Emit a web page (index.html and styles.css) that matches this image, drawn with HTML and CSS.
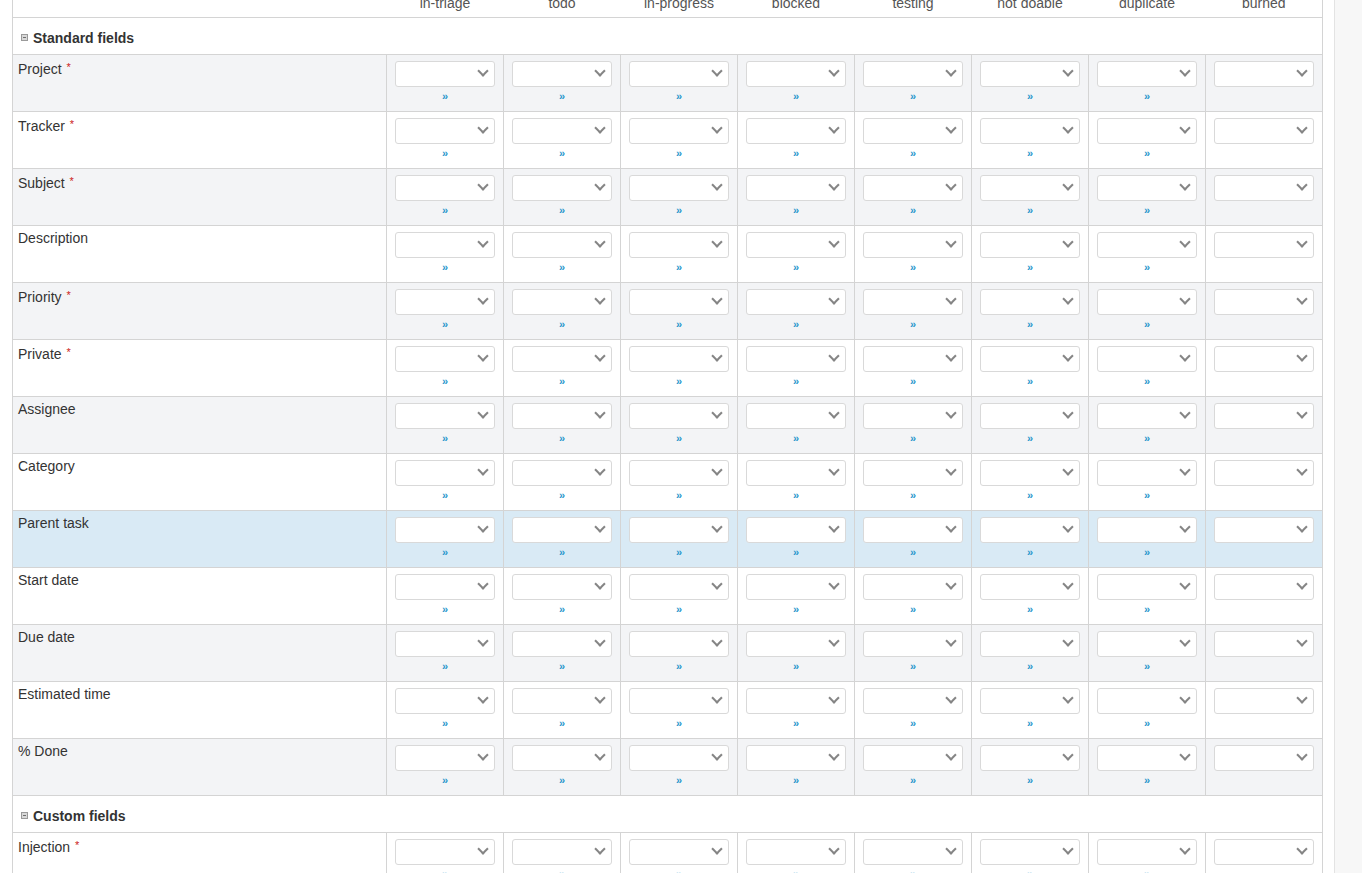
FILE: index.html
```html
<!DOCTYPE html>
<html>
<head>
<meta charset="utf-8">
<title>Workflow fields</title>
<link rel="stylesheet" href="styles.css">
</head>
<body>
<div class="page">
<div class="main">
<table class="wf">
<colgroup><col class="c-name"><col class="c-st"><col class="c-st"><col class="c-st"><col class="c-st"><col class="c-st"><col class="c-st"><col class="c-st"><col class="c-st"></colgroup>
<thead>
<tr><th class="first"></th><th>in-triage</th><th>todo</th><th>in-progress</th><th>blocked</th><th>testing</th><th>not doable</th><th>duplicate</th><th class="last">burned</th></tr>
</thead>
<tbody>
<tr class="group"><td colspan="9"><span class="toggle"></span>Standard fields</td></tr>
<tr class="odd"><td class="name">Project <span class="req">*</span></td><td><span class="sel"></span><a class="more" href="#">»</a></td><td><span class="sel"></span><a class="more" href="#">»</a></td><td><span class="sel"></span><a class="more" href="#">»</a></td><td><span class="sel"></span><a class="more" href="#">»</a></td><td><span class="sel"></span><a class="more" href="#">»</a></td><td><span class="sel"></span><a class="more" href="#">»</a></td><td><span class="sel"></span><a class="more" href="#">»</a></td><td><span class="sel"></span></td></tr>
<tr><td class="name">Tracker <span class="req">*</span></td><td><span class="sel"></span><a class="more" href="#">»</a></td><td><span class="sel"></span><a class="more" href="#">»</a></td><td><span class="sel"></span><a class="more" href="#">»</a></td><td><span class="sel"></span><a class="more" href="#">»</a></td><td><span class="sel"></span><a class="more" href="#">»</a></td><td><span class="sel"></span><a class="more" href="#">»</a></td><td><span class="sel"></span><a class="more" href="#">»</a></td><td><span class="sel"></span></td></tr>
<tr class="odd"><td class="name">Subject <span class="req">*</span></td><td><span class="sel"></span><a class="more" href="#">»</a></td><td><span class="sel"></span><a class="more" href="#">»</a></td><td><span class="sel"></span><a class="more" href="#">»</a></td><td><span class="sel"></span><a class="more" href="#">»</a></td><td><span class="sel"></span><a class="more" href="#">»</a></td><td><span class="sel"></span><a class="more" href="#">»</a></td><td><span class="sel"></span><a class="more" href="#">»</a></td><td><span class="sel"></span></td></tr>
<tr><td class="name">Description</td><td><span class="sel"></span><a class="more" href="#">»</a></td><td><span class="sel"></span><a class="more" href="#">»</a></td><td><span class="sel"></span><a class="more" href="#">»</a></td><td><span class="sel"></span><a class="more" href="#">»</a></td><td><span class="sel"></span><a class="more" href="#">»</a></td><td><span class="sel"></span><a class="more" href="#">»</a></td><td><span class="sel"></span><a class="more" href="#">»</a></td><td><span class="sel"></span></td></tr>
<tr class="odd"><td class="name">Priority <span class="req">*</span></td><td><span class="sel"></span><a class="more" href="#">»</a></td><td><span class="sel"></span><a class="more" href="#">»</a></td><td><span class="sel"></span><a class="more" href="#">»</a></td><td><span class="sel"></span><a class="more" href="#">»</a></td><td><span class="sel"></span><a class="more" href="#">»</a></td><td><span class="sel"></span><a class="more" href="#">»</a></td><td><span class="sel"></span><a class="more" href="#">»</a></td><td><span class="sel"></span></td></tr>
<tr><td class="name">Private <span class="req">*</span></td><td><span class="sel"></span><a class="more" href="#">»</a></td><td><span class="sel"></span><a class="more" href="#">»</a></td><td><span class="sel"></span><a class="more" href="#">»</a></td><td><span class="sel"></span><a class="more" href="#">»</a></td><td><span class="sel"></span><a class="more" href="#">»</a></td><td><span class="sel"></span><a class="more" href="#">»</a></td><td><span class="sel"></span><a class="more" href="#">»</a></td><td><span class="sel"></span></td></tr>
<tr class="odd"><td class="name">Assignee</td><td><span class="sel"></span><a class="more" href="#">»</a></td><td><span class="sel"></span><a class="more" href="#">»</a></td><td><span class="sel"></span><a class="more" href="#">»</a></td><td><span class="sel"></span><a class="more" href="#">»</a></td><td><span class="sel"></span><a class="more" href="#">»</a></td><td><span class="sel"></span><a class="more" href="#">»</a></td><td><span class="sel"></span><a class="more" href="#">»</a></td><td><span class="sel"></span></td></tr>
<tr><td class="name">Category</td><td><span class="sel"></span><a class="more" href="#">»</a></td><td><span class="sel"></span><a class="more" href="#">»</a></td><td><span class="sel"></span><a class="more" href="#">»</a></td><td><span class="sel"></span><a class="more" href="#">»</a></td><td><span class="sel"></span><a class="more" href="#">»</a></td><td><span class="sel"></span><a class="more" href="#">»</a></td><td><span class="sel"></span><a class="more" href="#">»</a></td><td><span class="sel"></span></td></tr>
<tr class="hl"><td class="name">Parent task</td><td><span class="sel"></span><a class="more" href="#">»</a></td><td><span class="sel"></span><a class="more" href="#">»</a></td><td><span class="sel"></span><a class="more" href="#">»</a></td><td><span class="sel"></span><a class="more" href="#">»</a></td><td><span class="sel"></span><a class="more" href="#">»</a></td><td><span class="sel"></span><a class="more" href="#">»</a></td><td><span class="sel"></span><a class="more" href="#">»</a></td><td><span class="sel"></span></td></tr>
<tr><td class="name">Start date</td><td><span class="sel"></span><a class="more" href="#">»</a></td><td><span class="sel"></span><a class="more" href="#">»</a></td><td><span class="sel"></span><a class="more" href="#">»</a></td><td><span class="sel"></span><a class="more" href="#">»</a></td><td><span class="sel"></span><a class="more" href="#">»</a></td><td><span class="sel"></span><a class="more" href="#">»</a></td><td><span class="sel"></span><a class="more" href="#">»</a></td><td><span class="sel"></span></td></tr>
<tr class="odd"><td class="name">Due date</td><td><span class="sel"></span><a class="more" href="#">»</a></td><td><span class="sel"></span><a class="more" href="#">»</a></td><td><span class="sel"></span><a class="more" href="#">»</a></td><td><span class="sel"></span><a class="more" href="#">»</a></td><td><span class="sel"></span><a class="more" href="#">»</a></td><td><span class="sel"></span><a class="more" href="#">»</a></td><td><span class="sel"></span><a class="more" href="#">»</a></td><td><span class="sel"></span></td></tr>
<tr><td class="name">Estimated time</td><td><span class="sel"></span><a class="more" href="#">»</a></td><td><span class="sel"></span><a class="more" href="#">»</a></td><td><span class="sel"></span><a class="more" href="#">»</a></td><td><span class="sel"></span><a class="more" href="#">»</a></td><td><span class="sel"></span><a class="more" href="#">»</a></td><td><span class="sel"></span><a class="more" href="#">»</a></td><td><span class="sel"></span><a class="more" href="#">»</a></td><td><span class="sel"></span></td></tr>
<tr class="odd"><td class="name">% Done</td><td><span class="sel"></span><a class="more" href="#">»</a></td><td><span class="sel"></span><a class="more" href="#">»</a></td><td><span class="sel"></span><a class="more" href="#">»</a></td><td><span class="sel"></span><a class="more" href="#">»</a></td><td><span class="sel"></span><a class="more" href="#">»</a></td><td><span class="sel"></span><a class="more" href="#">»</a></td><td><span class="sel"></span><a class="more" href="#">»</a></td><td><span class="sel"></span></td></tr>
<tr class="group"><td colspan="9"><span class="toggle"></span>Custom fields</td></tr>
<tr><td class="name">Injection <span class="req">*</span></td><td><span class="sel"></span><a class="more" href="#">»</a></td><td><span class="sel"></span><a class="more" href="#">»</a></td><td><span class="sel"></span><a class="more" href="#">»</a></td><td><span class="sel"></span><a class="more" href="#">»</a></td><td><span class="sel"></span><a class="more" href="#">»</a></td><td><span class="sel"></span><a class="more" href="#">»</a></td><td><span class="sel"></span><a class="more" href="#">»</a></td><td><span class="sel"></span></td></tr>
</tbody>
</table>
</div>
<div class="side"></div>
</div>
</body>
</html>
```
FILE: styles.css
```css
html, body {
  margin: 0;
  padding: 0;
  height: 873px;
  overflow: hidden;
  background: #fff;
}
body {
  font-family: "Liberation Sans", Arial, Helvetica, sans-serif;
  font-size: 14px;
  color: #333;
}
.page {
  display: flex;
  height: 873px;
  overflow: hidden;
}
.main {
  flex: 1;
  padding: 0 11px 0 12px;
  overflow: hidden;
}
.side {
  width: 27px;
  border-left: 1px solid #e3e3e3;
  background: #f7f7f7;
}
table.wf {
  margin-top: -8px;
  border-collapse: collapse;
  table-layout: fixed;
  width: 1311px;
}
col.c-name { width: 374px; }
col.c-st { width: 117px; }

table.wf thead th {
  font-weight: normal;
  color: #555;
  padding: 3px 2px 5px;
  line-height: 17px;
  text-align: center;
  border-bottom: 1px solid #d4d4d4;
  white-space: nowrap;
}
table.wf thead th.first { border-left: 1px solid #d4d4d4; }
table.wf thead th.last { border-right: 1px solid #d4d4d4; }

table.wf tbody td {
  border: 1px solid #d4d4d4;
  vertical-align: top;
  padding: 6px 0;
  text-align: center;
}
table.wf tbody td.name {
  text-align: left;
  padding: 4px 5px 6px;
  line-height: 17px;
  color: #333;
}
tr.odd td { background: #f3f4f6; }
tr.hl td { background: #d9eaf5; }

table.wf tr.group td {
  text-align: left;
  font-weight: bold;
  padding: 11px 8px 7px;
  line-height: 18px;
  vertical-align: top;
  color: #333;
  background: #fff;
}
.toggle {
  display: inline-block;
  width: 7px;
  height: 7px;
  box-sizing: border-box;
  border: 1px solid #9a9a9a;
  background: #d9d9d9;
  margin-right: 5px;
  vertical-align: 2px;
  position: relative;
}
.toggle::after {
  content: "";
  position: absolute;
  left: 1px;
  right: 1px;
  top: 2px;
  height: 1px;
  background: #6e6e6e;
}
.req {
  color: #cc2222;
  font-size: 11px;
  vertical-align: 3px;
  margin-left: 1px;
}
.sel {
  display: block;
  width: 100px;
  height: 26px;
  box-sizing: border-box;
  margin: 0 auto;
  border: 1px solid #d9d9d9;
  border-radius: 3px;
  background: #fff;
  position: relative;
}
.sel::after {
  content: "";
  position: absolute;
  right: 7px;
  top: 5px;
  width: 6px;
  height: 6px;
  border-right: 2px solid #858585;
  border-bottom: 2px solid #858585;
  transform: rotate(45deg);
}
.more {
  display: block;
  text-align: center;
  font-size: 11px;
  line-height: 18px;
  height: 18px;
  color: #2996cc;
  text-decoration: none;
  font-weight: bold;
}
```
